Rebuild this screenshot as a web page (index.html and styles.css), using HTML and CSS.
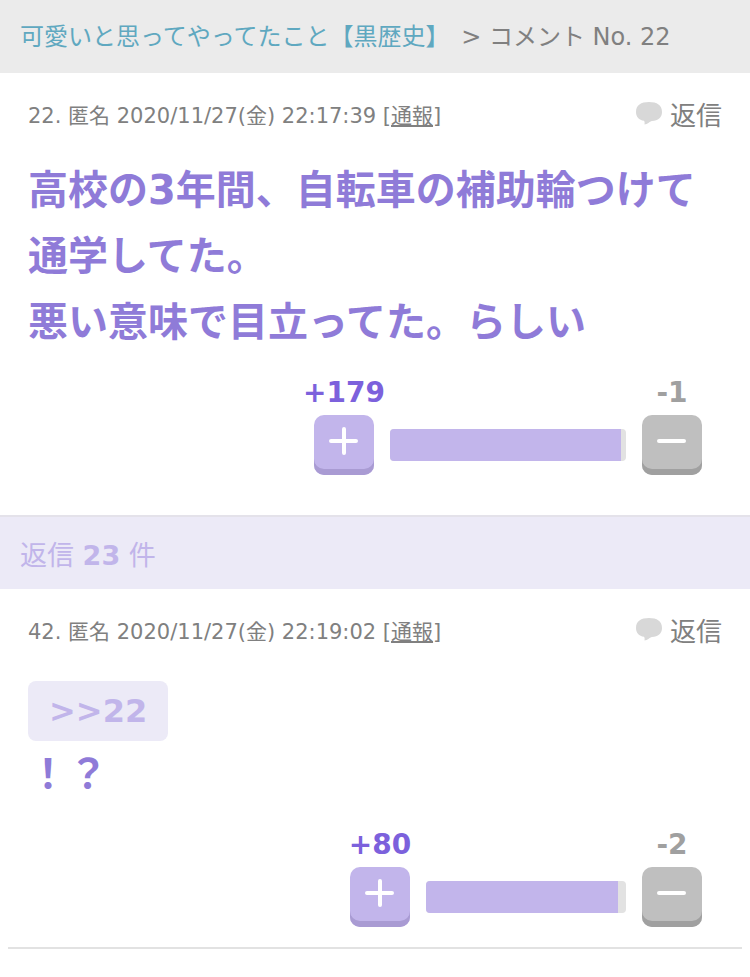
FILE: index.html
```html
<!DOCTYPE html>
<html lang="ja">

<head>
  <meta charset="UTF-8" />
  <meta name="viewport" content="width=device-width, initial-scale=1" />
  <title>コメント No. 22</title>
  <link rel="stylesheet" href="styles.css">
</head>

<body>
  <nav class="breadcrumb">
    <a href="#topic">可愛いと思ってやってたこと【黒歴史】</a> &gt; コメント No. 22
  </nav>

  <article class="comment main-comment">
    <div class="info">
      <p>22. 匿名 2020/11/27(金) 22:17:39 [<a href="#report">通報</a>]</p>
      <a class="reply-link" href="#reply">
        <svg class="balloon" viewBox="0 0 26 24" aria-hidden="true">
          <path d="M13 0C21 0 26 3 26 10C26 16 22 18.500 16 19C13.500 19.500 11.500 22.500 8.500 22.500C8.500 21 9 20 8 18.800C3 18 0 15 0 10C0 3 5 0 13 0Z" />
        </svg>
        返信
      </a>
    </div>
    <div class="body">高校の3年間、自転車の補助輪つけて通学してた。<br>悪い意味で目立ってた。らしい</div>
    <div class="votes">
      <span class="count plus-count">+179</span>
      <span class="count minus-count">-1</span>
      <button class="vote plus" aria-label="プラス">
        <svg viewBox="0 0 30 30"><path d="M2 15H27M15 3V27" /></svg>
      </button>
      <div class="bar" style="width: 236px"><div class="fill" style="width: 98%"></div></div>
      <button class="vote minus" aria-label="マイナス">
        <svg viewBox="0 0 30 30"><path d="M2 15H27" /></svg>
      </button>
    </div>
  </article>

  <h2 class="reply-head">返信 <b>23</b> 件</h2>

  <article class="comment">
    <div class="info">
      <p>42. 匿名 2020/11/27(金) 22:19:02 [<a href="#report">通報</a>]</p>
      <a class="reply-link" href="#reply">
        <svg class="balloon" viewBox="0 0 26 24" aria-hidden="true">
          <path d="M13 0C21 0 26 3 26 10C26 16 22 18.500 16 19C13.500 19.500 11.500 22.500 8.500 22.500C8.500 21 9 20 8 18.800C3 18 0 15 0 10C0 3 5 0 13 0Z" />
        </svg>
        返信
      </a>
    </div>
    <div class="body">
      <a class="anchor" href="#comment22">&gt;&gt;22</a>
      <div>！？</div>
    </div>
    <div class="votes">
      <span class="count plus-count">+80</span>
      <span class="count minus-count">-2</span>
      <button class="vote plus" aria-label="プラス">
        <svg viewBox="0 0 30 30"><path d="M2 15H27M15 3V27" /></svg>
      </button>
      <div class="bar" style="width: 200px"><div class="fill" style="width: 96%"></div></div>
      <button class="vote minus" aria-label="マイナス">
        <svg viewBox="0 0 30 30"><path d="M2 15H27" /></svg>
      </button>
    </div>
  </article>
</body>

</html>
```
FILE: styles.css
```css
* {
  box-sizing: border-box;
}

body {
  margin: 0;
  background: #fff;
  color: #808080;
  font-family: Verdana, "DejaVu Sans", "Noto Sans CJK JP", sans-serif;
}

.breadcrumb {
  padding: 17px 20px 16px;
  background: #ebebeb;
  font-size: 24px;
  line-height: 40px;
}

.breadcrumb a {
  margin-right: 4px;
  color: #5fa8c0;
  text-decoration: none;
}

.comment {
  margin: 0 8px;
  padding: 23px 20px 20px;
  border-bottom: 2px solid #e2e2e2;
}

.main-comment {
  padding-bottom: 40px;
  border-bottom: none;
}

/* Number, name, date and reply link */
.info {
  display: flex;
  justify-content: space-between;
  align-items: center;
  height: 40px;
  font-size: 21px;
}

.info p {
  margin: 0;
  padding-bottom: 4px;
}

.info a {
  color: inherit;
}

.info .reply-link {
  display: flex;
  align-items: center;
  gap: 8px;
  font-size: 26px;
  line-height: 40px;
  text-decoration: none;
}

.balloon {
  width: 26px;
  height: 24px;
  margin-bottom: 4px;
  fill: #d8d8d8;
}

.body {
  margin-top: 21px;
  color: #8f7bd8;
  font-size: 40px;
  font-weight: bold;
  line-height: 66px;
}

.anchor {
  display: block;
  width: fit-content;
  margin-top: 29px;
  padding: 0 21px;
  border-radius: 8px;
  background: #eceaf7;
  color: #c1b5ea;
  font-size: 32px;
  line-height: 60px;
  text-decoration: none;
}

/* Plus / minus votes */
.votes {
  display: grid;
  grid-template-columns: 60px auto 60px;
  column-gap: 16px;
  row-gap: 6px;
  justify-content: end;
  justify-items: center;
  align-items: center;
  margin-top: 22px;
  padding-right: 20px;
}

.count {
  font-size: 28px;
  font-weight: bold;
  line-height: 32px;
}

.plus-count {
  color: #7c61dc;
}

.minus-count {
  grid-column: 3;
  color: #a0a0a0;
}

.vote {
  display: flex;
  justify-content: center;
  width: 60px;
  height: 60px;
  padding: 11px 0 0;
  border: none;
  border-radius: 10px;
  cursor: pointer;
}

.vote svg {
  width: 30px;
  height: 30px;
  fill: none;
  stroke: #fff;
  stroke-width: 4;
  stroke-linecap: round;
}

.plus {
  background: #c2b5eb;
  box-shadow: inset 0 -6px #a99bd3;
}

.minus {
  background: #bfbfbf;
  box-shadow: inset 0 -6px #a0a0a0;
}

.bar {
  height: 32px;
  border-radius: 4px;
  background: #e2e2e2;
  overflow: hidden;
}

.fill {
  height: 100%;
  background: #c2b5eb;
}

.reply-head {
  margin: 0;
  padding: 19px 20px 13px;
  border-top: 2px solid #e4e2ea;
  background: #eceaf7;
  color: #c1b5ea;
  font-size: 27px;
  font-weight: normal;
  line-height: 40px;
}
```
